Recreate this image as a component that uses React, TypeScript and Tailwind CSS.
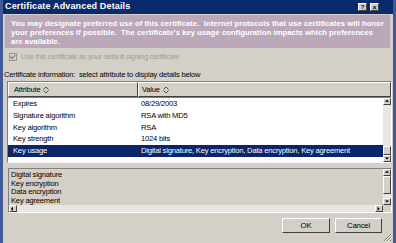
import React from "react";

const rows = [
  { attr: "Expires", value: "08/29/2003" },
  { attr: "Signature algorithm", value: "RSA with MD5" },
  { attr: "Key algorithm", value: "RSA" },
  { attr: "Key strength", value: "1024 bits" },
  { attr: "Key usage", value: "Digital signature, Key encryption, Data encryption, Key agreement", selected: true },
  { attr: "", value: "" },
];

const details = ["Digital signature", "Key encryption", "Data encryption", "Key agreement"];

// classic 3d boxes
const raised = "border border-t-white border-l-white border-r-[#404040] border-b-[#404040]";

const Arrow = ({ dir }: { dir: "up" | "down" | "left" | "right" }) => {
  const pts = {
    up: "1,4 4,1 7,4",
    down: "1,2 4,5 7,2",
    left: "4,1 1,4 4,7",
    right: "2,1 5,4 2,7",
  }[dir];
  return (
    <div className={`w-[8px] h-[7px] bg-[#d4d0c8] ${raised} flex items-center justify-center`}>
      <svg width="6" height="5" viewBox="0 0 8 7">
        <polygon points={pts} fill="#000" />
      </svg>
    </div>
  );
};

const SortIcon = () => (
  <svg width="6" height="8" viewBox="0 0 6 8" className="ml-[3px]">
    <path d="M0.5 3.5 L3 1 L5.5 3.5 M0.5 4.5 L3 7 L5.5 4.5" stroke="#333" fill="none" strokeWidth="0.8" />
  </svg>
);

export default function App() {
  return (
    <div
      className="w-[396px] h-[243px] bg-[#3f5a97] flex flex-col px-[3px] pb-[3px] overflow-hidden"
      style={{ fontFamily: '"Liberation Sans", Arial, sans-serif' }}
    >
      {/* title bar */}
      <div className="h-[14px] bg-[#0b2a6e] flex items-center pl-[2px] pr-[14px] shrink-0">
        <span className="text-white font-bold text-[9px] tracking-[0.15px]">Certificate Advanced Details</span>
        <div className="ml-auto flex gap-[3px]">
          <div className={`w-[9px] h-[8px] bg-[#d4d0c8] ${raised} flex items-center justify-center text-[6px] font-bold leading-none`}>?</div>
          <div className={`w-[9px] h-[8px] bg-[#d4d0c8] ${raised} flex items-center justify-center text-[7px] font-bold leading-none`}>×</div>
        </div>
      </div>

      {/* body */}
      <div className="flex-1 bg-[#d4d0c8] flex flex-col text-[7.6px] tracking-[-0.2px] text-black">
        <div className="mt-[1px] ml-[2px] mr-[3px] h-[33px] bg-[#baa8b9] pl-[6px] pt-[4px] text-white font-bold leading-[9px] text-[7.6px] tracking-[0.08px] whitespace-nowrap">
          You may designate preferred use of this certificate.&nbsp; Internet protocols that use certificates will honor
          <br />
          your preferences if possible.&nbsp; The certificate's key usage configuration impacts which preferences
          <br />
          are available.
        </div>

        <div className="flex items-center mt-[5px] ml-[6px] h-[8px]">
          <div className="w-[8px] h-[8px] bg-[#d4d0c8] border border-[#9a968e] flex items-center justify-center">
            <svg width="6" height="6" viewBox="0 0 6 6">
              <path d="M0.5 2.5 L2.3 4.5 L5.5 0.8" stroke="#8c887f" strokeWidth="1.2" fill="none" />
            </svg>
          </div>
          <span className="ml-[4px] text-[#a19d95] tracking-[-0.3px]">Use this certificate as your default signing certificate</span>
        </div>

        <div className="mt-[10px] ml-[1px] leading-[8px]">Certificate information:&nbsp; select attribute to display details below</div>

        {/* table */}
        <div className="mt-[2px] ml-[4px] mr-[1px] h-[82px] border border-t-[#808080] border-l-[#808080] border-r-white border-b-white flex flex-col">
          <div className="h-[16px] flex bg-[#d4d0c8] border-b border-[#808080] shrink-0">
            <div className={`w-[130px] ${raised} flex items-center pl-[5px]`}>
              Attribute
              <SortIcon />
            </div>
            <div className={`flex-1 ${raised} flex items-center pl-[3px]`}>
              Value
              <SortIcon />
            </div>
          </div>
          <div className="flex flex-1 overflow-hidden">
            <div className="flex-1 bg-white flex flex-col">
              {rows.map((r, i) => (
                <div
                  key={i}
                  className={`h-[11.75px] shrink-0 flex items-center ${r.selected ? "bg-[#0c2468] text-white" : ""}`}
                >
                  <div className="w-[130px] pl-[5px]">{r.attr}</div>
                  <div className="pl-[3px] whitespace-nowrap">{r.value}</div>
                </div>
              ))}
            </div>
            <div className="w-[8px] bg-[#e8e6e2] flex flex-col">
              <Arrow dir="up" />
              <div className="flex-1" />
              <div className={`h-[9px] bg-[#d4d0c8] ${raised}`} />
              <Arrow dir="down" />
            </div>
          </div>
        </div>

        {/* details */}
        <div className="mt-[5px] ml-[5px] mr-[1px] h-[45px] border border-t-[#808080] border-l-[#808080] border-r-white border-b-white flex flex-col">
          <div className="flex flex-1 overflow-hidden">
            <div className="flex-1 pl-[2px] pt-[2px] leading-[8.7px]">
              {details.map((d) => (
                <div key={d}>{d}</div>
              ))}
            </div>
            <div className="w-[8px] bg-[#e8e6e2] flex flex-col">
              <Arrow dir="up" />
              <div className={`h-[18px] bg-[#d4d0c8] ${raised}`} />
              <div className="flex-1" />
              <Arrow dir="down" />
            </div>
          </div>
          <div className="h-[7px] flex bg-[#e8e6e2] shrink-0">
            <Arrow dir="left" />
            <div className="flex-1" />
            <Arrow dir="right" />
            <div className="w-[8px] bg-[#d4d0c8]" />
          </div>
        </div>

        {/* buttons */}
        <div className="flex justify-end gap-[5px] mt-[5px] mr-[11px]">
          <button className={`w-[48px] h-[15px] bg-[#d4d0c8] ${raised} text-[7.8px]`}>OK</button>
          <button className={`w-[47px] h-[15px] bg-[#d4d0c8] ${raised} text-[7.8px]`}>Cancel</button>
        </div>
        <div className="flex-1 flex justify-end items-end pr-[1px] pb-[1px]">
          <svg width="9" height="9" viewBox="0 0 9 9">
            <path d="M8 1 L1 8 M8 4 L4 8 M8 7 L7 8" stroke="#808080" strokeWidth="1" />
            <path d="M9 1 L1 9 M9 4 L4 9" stroke="#fff" strokeWidth="0.6" />
          </svg>
        </div>
      </div>
    </div>
  );
}
